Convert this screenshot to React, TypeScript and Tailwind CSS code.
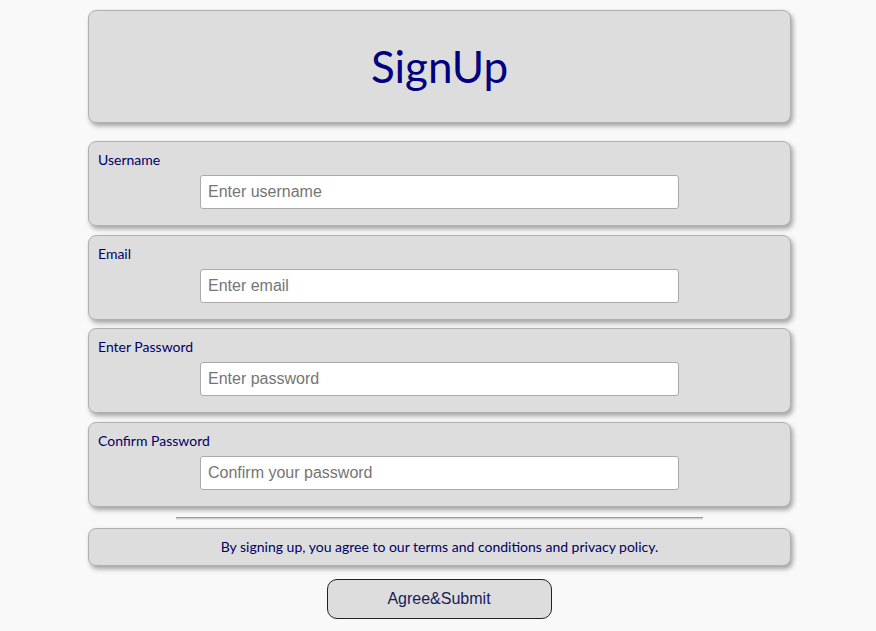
import React from "react";

const fields = [
  { label: "Username", placeholder: "Enter username", type: "text" },
  { label: "Email", placeholder: "Enter email", type: "email" },
  { label: "Enter Password", placeholder: "Enter password", type: "password" },
  { label: "Confirm Password", placeholder: "Confirm your password", type: "password" },
];

const card =
  "bg-[#dddddd] border border-[#b0b0b0] rounded-[8px] shadow-[2px_3px_5px_rgba(0,0,0,0.35)]";

export default function App() {
  return (
    <div className="min-h-[631px] w-full bg-[#f9f9f9] pt-[10px]" style={{ fontFamily: "Lato, 'Open Sans', sans-serif" }}>
      <div className="ml-[88px] w-[703px] flex flex-col">
        <div className={`${card} h-[113px] flex items-center justify-center`}>
          <h1 className="text-[44px] leading-none text-[#000080] -mt-[2px]">SignUp</h1>
        </div>
        <div className="mt-[18px] flex flex-col gap-[8.5px]">
          {fields.map((f) => (
            <div key={f.label} className={`${card} h-[85px] pt-[10px] flex flex-col`}>
              <label className="pl-[9px] text-[14px] leading-[16px] text-[#000066]">{f.label}</label>
              <div className="flex justify-center mt-[7px]">
                <input
                  type={f.type}
                  placeholder={f.placeholder}
                  className="w-[479px] h-[34px] bg-white border border-[#aaaaaa] rounded-[3px] px-[7px] text-[16px] placeholder:text-[#757575] outline-none"
                  style={{ fontFamily: "'Liberation Sans', Arial, sans-serif" }}
                />
              </div>
            </div>
          ))}
        </div>
        <div className="mt-[10px] flex justify-center">
          <div className="w-[527px] h-[3px] border-t border-[#999999] bg-[#cfcfcf] border-b border-b-[#e8e8e8]" />
        </div>
        <div className={`${card} mt-[8px] h-[38px] flex items-center justify-center`}>
          <p className="text-[14px] text-[#000066]">
            By signing up, you agree to our terms and conditions and privacy policy.
          </p>
        </div>
        <div className="mt-[13px] flex justify-center">
          <button
            className="w-[225px] h-[40px] bg-[#dddddd] border border-[#222] rounded-[10px] text-[16px] text-[#1a1a5e] -ml-[1px]"
            style={{ fontFamily: "'Liberation Sans', Arial, sans-serif" }}
          >
            Agree&amp;Submit
          </button>
        </div>
      </div>
    </div>
  );
}
